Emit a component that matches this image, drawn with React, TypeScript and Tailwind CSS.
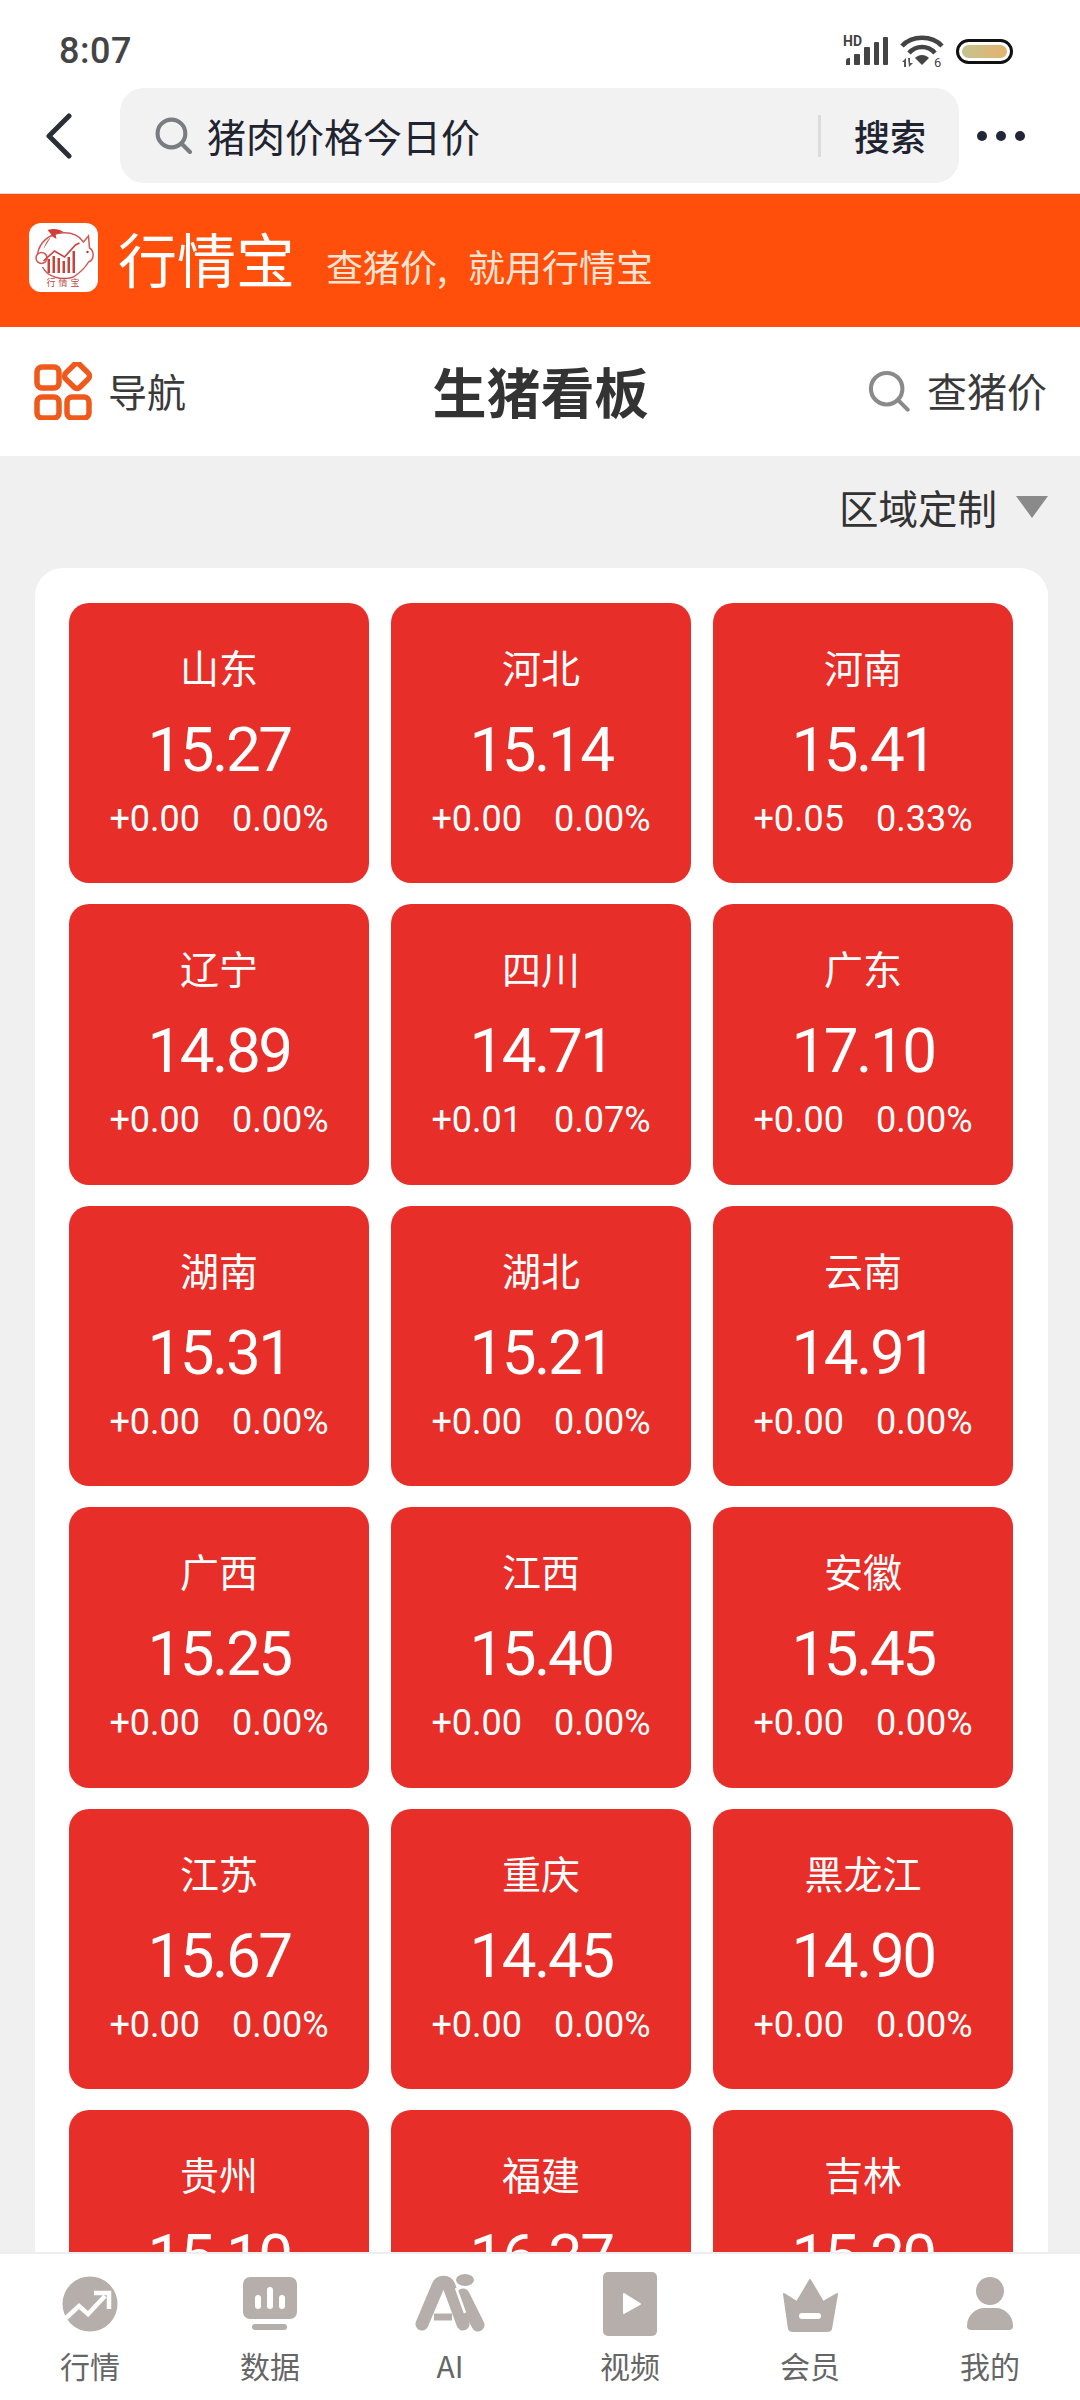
import React from "react";

const cjk = '"Noto Sans CJK SC", "Noto Sans", sans-serif';
const num = 'Roboto, "Noto Sans CJK SC", sans-serif';

const tiles: [string, string, string, string][] = [
  ["山东", "15.27", "+0.00", "0.00%"],
  ["河北", "15.14", "+0.00", "0.00%"],
  ["河南", "15.41", "+0.05", "0.33%"],
  ["辽宁", "14.89", "+0.00", "0.00%"],
  ["四川", "14.71", "+0.01", "0.07%"],
  ["广东", "17.10", "+0.00", "0.00%"],
  ["湖南", "15.31", "+0.00", "0.00%"],
  ["湖北", "15.21", "+0.00", "0.00%"],
  ["云南", "14.91", "+0.00", "0.00%"],
  ["广西", "15.25", "+0.00", "0.00%"],
  ["江西", "15.40", "+0.00", "0.00%"],
  ["安徽", "15.45", "+0.00", "0.00%"],
  ["江苏", "15.67", "+0.00", "0.00%"],
  ["重庆", "14.45", "+0.00", "0.00%"],
  ["黑龙江", "14.90", "+0.00", "0.00%"],
  ["贵州", "15.10", "+0.00", "0.00%"],
  ["福建", "16.37", "+0.00", "0.00%"],
  ["吉林", "15.20", "+0.00", "0.00%"],
];

function StatusIcons() {
  return (
    <div className="flex items-center">
      <svg width="46" height="32" viewBox="0 0 46 32" fill="#444">
        <text x="0" y="11" fontSize="14" fontWeight="700" fontFamily="Roboto, sans-serif" fill="#444">HD</text>
        <path d="M3 26 a3 3 0 0 1 3-3 h1 v7 h-4z" />
        <rect x="11" y="19" width="6" height="11" rx="1" />
        <rect x="21" y="12" width="6" height="18" rx="1" />
        <rect x="31" y="7" width="5" height="23" rx="1" />
        <rect x="40" y="2" width="5" height="28" rx="1" />
      </svg>
      <svg width="44" height="34" viewBox="0 0 44 34" className="ml-[11px]" fill="none">
        <path d="M2 12 C12 1 32 1 42 12" stroke="#444" strokeWidth="4.5" />
        <path d="M9 19 C16 11 28 11 35 19" stroke="#444" strokeWidth="4.5" />
        <path d="M15 24 C19 20 25 20 29 24 L22 31 Z" fill="#444" />
        <path d="M2 28 l4-4 v9 h-2 v-5z M8 24 h2 v5 l3 0 -4 4z" fill="#555" />
        <text x="34" y="33" fontSize="13" fontFamily="Roboto, sans-serif" fill="#444">6</text>
      </svg>
      <div className="ml-[12px] h-[25px] w-[57px] rounded-full border-[3px] border-[#111] bg-white p-[3px]">
        <div className="h-full w-full rounded-full bg-gradient-to-r from-[#c3c38f] to-[#e5b26c]" />
      </div>
    </div>
  );
}

function SearchGlyph({ size, color, sw }: { size: number; color: string; sw: number }) {
  return (
    <svg width={size} height={size} viewBox="0 0 36 36" fill="none" stroke={color} strokeWidth={sw} strokeLinecap="round">
      <circle cx="16" cy="16" r="13.5" />
      <path d="M26 26 L34 34" />
    </svg>
  );
}

function PigLogo() {
  return (
    <div className="flex h-[69px] w-[69px] items-center justify-center rounded-[12px] bg-white">
      <svg width="69" height="69" viewBox="0 0 68 69" fill="none">
        <path d="M8 31 C10 19 20 11 31 10 C42 9 50 13 54 19 L59 13 L60 25 C65 28 65 37 59 39 C55 46 50 50 44 54 C32 58 18 54 13 44" stroke="#cf5a55" strokeWidth="1.5" />
        <path d="M14 26 C16 20 19 15 23 13 L18 7 C24 5 30 6 34 9 L26 11 L27 16 L22 13" fill="#cf4038" />
        <circle cx="12" cy="35" r="5.5" stroke="#cf5a55" strokeWidth="1.5" />
        <circle cx="58" cy="29" r="1.2" fill="#b33" />
        <path d="M14 38 L25 28 L35 34 L46 22 L50 20" stroke="#d0403a" strokeWidth="1.6" />
        <g fill="#c9433c">
          <rect x="18" y="36" width="2.5" height="14" />
          <rect x="23" y="33" width="2.5" height="17" />
          <rect x="28" y="35" width="2.5" height="15" />
          <rect x="33" y="38" width="2.5" height="12" />
          <rect x="38" y="34" width="2.5" height="16" />
          <rect x="43" y="28" width="2.5" height="22" />
        </g>
        <text x="17" y="63" fontSize="9" fill="#b9473f" fontFamily={cjk} letterSpacing="3">行情宝</text>
      </svg>
    </div>
  );
}

function NavGrid() {
  return (
    <svg width="58" height="58" viewBox="0 0 58 58" fill="none" stroke="#ef5a1c" strokeWidth="5.5">
      <rect x="3" y="5" width="22" height="21" rx="5" />
      <rect x="33" y="4" width="20" height="20" rx="4" transform="rotate(45 43 14)" />
      <rect x="3" y="35" width="22" height="21" rx="5" />
      <rect x="33" y="35" width="22" height="21" rx="5" />
    </svg>
  );
}

function Tile({ t }: { t: [string, string, string, string] }) {
  return (
    <div className="flex h-[280.4px] flex-col items-center rounded-[20px] bg-[#e82e28] pt-[42px] text-white">
      <div className="text-[39px] leading-[42px]" style={{ fontFamily: cjk }}>{t[0]}</div>
      <div className="mt-[32px] text-[62px] leading-[62px] font-normal tracking-[-2.5px]" style={{ fontFamily: num }}>{t[1]}</div>
      <div className="mt-[18px] flex gap-[32px] text-[36px] leading-[40px] font-normal" style={{ fontFamily: num }}>
        <span>{t[2]}</span>
        <span>{t[3]}</span>
      </div>
    </div>
  );
}

const gray = "#b5aeab";
const tabIcons: Record<string, React.ReactNode> = {
  行情: (
    <svg width="72" height="72" viewBox="0 0 72 72">
      <circle cx="36" cy="33" r="27.5" fill={gray} />
      <path d="M12 47 L25 35 L34 43 L51 25" fill="none" stroke="#fff" strokeWidth="4.5" />
      <path d="M40 22 H55 V38" fill="none" stroke="#fff" strokeWidth="4.5" />
    </svg>
  ),
  数据: (
    <svg width="72" height="72" viewBox="0 0 72 72">
      <rect x="9" y="6" width="54" height="42" rx="7" fill={gray} />
      <rect x="21" y="24" width="6" height="14" rx="3" fill="#fff" />
      <rect x="33" y="16" width="6" height="22" rx="3" fill="#fff" />
      <rect x="45" y="24" width="6" height="14" rx="3" fill="#fff" />
      <rect x="18" y="53" width="35" height="6" rx="3" fill={gray} />
    </svg>
  ),
  AI: (
    <svg width="72" height="72" viewBox="0 0 72 72" fill="none">
      <path d="M8 53 L24 15 C26 10 33 10 35 15 L49 53" stroke={gray} strokeWidth="13" strokeLinecap="round" />
      <path d="M20 46 H38" stroke={gray} strokeWidth="7" />
      <path d="M49 24 L64 54" stroke={gray} strokeWidth="13" strokeLinecap="round" />
      <ellipse cx="51" cy="9" rx="9" ry="6" fill={gray} />
      <path d="M29 24 L22 40 H36 Z" fill="#fff" />
      <path d="M42 17 L51 42" stroke="#fff" strokeWidth="2.5" />
    </svg>
  ),
  视频: (
    <svg width="72" height="72" viewBox="0 0 72 72">
      <rect x="9" y="1" width="54" height="64" rx="5" fill={gray} />
      <path d="M30 23 L46 33 L30 42 Z" fill="#fff" stroke="#fff" strokeWidth="2" strokeLinejoin="round" />
    </svg>
  ),
  会员: (
    <svg width="72" height="72" viewBox="0 0 72 72">
      <path d="M10 23 L23 31 L36 9 L49 31 L63 23 L57 58 Q56 60 53 60 H19 Q16 60 15 58 Z" fill={gray} stroke={gray} strokeWidth="2" strokeLinejoin="round" />
      <rect x="25" y="42" width="22" height="6" rx="3" fill="#fff" />
    </svg>
  ),
  我的: (
    <svg width="72" height="72" viewBox="0 0 72 72">
      <circle cx="36" cy="20" r="14" fill={gray} />
      <path d="M13 55 C13 44 22 37 30 37 H42 C50 37 59 44 59 55 Q59 59 55 59 H17 Q13 59 13 55 Z" fill={gray} />
    </svg>
  ),
};

export default function App() {
  return (
    <div className="flex h-[2400px] w-[1080px] flex-col overflow-hidden bg-white" style={{ fontFamily: cjk }}>
      <header className="flex h-[88px] shrink-0 items-center justify-between pl-[59px] pr-[67px] pt-[14px]">
        <span className="text-[36px] leading-[44px] font-medium tracking-[0.5px] text-[#444]" style={{ fontFamily: num }}>8:07</span>
        <StatusIcons />
      </header>

      <div className="flex h-[95px] shrink-0 items-center">
        <div className="flex w-[120px] pl-[45px]">
          <svg width="28" height="46" viewBox="0 0 28 46" fill="none" stroke="#2a2e36" strokeWidth="5" strokeLinecap="round" strokeLinejoin="round">
            <path d="M24 3 L4 23 L24 43" />
          </svg>
        </div>
        <div className="flex h-[95px] w-[839px] items-center rounded-[24px] bg-[#f2f2f3] pl-[35px]">
          <SearchGlyph size={37} color="#7a7c82" sw={4} />
          <span className="ml-[15px] mt-[-2px] w-[611px] text-[39px] leading-[48px] text-[#1f2430]">猪肉价格今日价</span>
          <div className="h-[42px] w-[3px] bg-[#dcdcdc]" />
          <span className="ml-[33px] mt-[-2px] text-[36px] leading-[48px] font-medium text-[#1f2430]">搜索</span>
        </div>
        <div className="ml-[18px] flex gap-[9px]">
          <div className="h-[10px] w-[10px] rounded-full bg-[#23263a]" />
          <div className="h-[10px] w-[10px] rounded-full bg-[#23263a]" />
          <div className="h-[10px] w-[10px] rounded-full bg-[#23263a]" />
        </div>
      </div>

      <div className="mt-[10px] h-[1px] shrink-0 bg-[#ead9d0]" />
      <div className="flex h-[133px] shrink-0 items-center bg-[#ff4f0a] pb-[6px] pl-[29px]">
        <PigLogo />
        <span className="ml-[20px] text-[59px] leading-[70px] text-white">行情宝</span>
        <span className="ml-[31px] mt-[17px] flex text-[37px] leading-[48px] text-[#ffe3d3]">
          查猪价<span className="w-[31px]">,</span>就用行情宝
        </span>
      </div>

      <div className="grid h-[129px] shrink-0 grid-cols-[1fr_auto_1fr] items-center pb-[2px] pl-[34px] pr-[33px]">
        <div className="flex items-center">
          <NavGrid />
          <span className="ml-[16px] mt-[-2px] text-[39px] leading-[48px] text-[#3a3a3a]">导航</span>
        </div>
        <span className="text-[54px] leading-[64px] font-bold text-[#333]">生猪看板</span>
        <div className="flex items-center justify-end">
          <SearchGlyph size={42} color="#8a8a8a" sw={3.5} />
          <span className="ml-[17px] mt-[-2px] text-[40px] leading-[48px] text-[#3a3a3a]">查猪价</span>
        </div>
      </div>

      <main className="min-h-0 flex-1 overflow-hidden bg-[#f0f0f0] pl-[35px] pr-[32px] pt-[26px]">
        <div className="flex items-center justify-end">
          <span className="text-[39.5px] leading-[50px] text-[#333]">区域定制</span>
          <svg width="32" height="22" viewBox="0 0 32 22" className="ml-[19px]">
            <path d="M0 0 H32 L16 22 Z" fill="#8a8a8a" />
          </svg>
        </div>
        <div className="mt-[36px] grid grid-cols-3 gap-x-[22px] gap-y-[21px] rounded-t-[28px] bg-white pl-[34px] pr-[35px] pt-[35px]">
          {tiles.map((t) => (
            <Tile key={t[0]} t={t} />
          ))}
        </div>
      </main>

      <nav className="grid h-[148px] shrink-0 grid-cols-6 border-t-2 border-[#eeeeee] bg-white pt-[17px]">
        {Object.entries(tabIcons).map(([label, icon]) => (
          <div key={label} className="flex flex-col items-center">
            {icon}
            <span className="mt-[2px] text-[30px] leading-[40px] text-[#666]">{label}</span>
          </div>
        ))}
      </nav>
    </div>
  );
}
